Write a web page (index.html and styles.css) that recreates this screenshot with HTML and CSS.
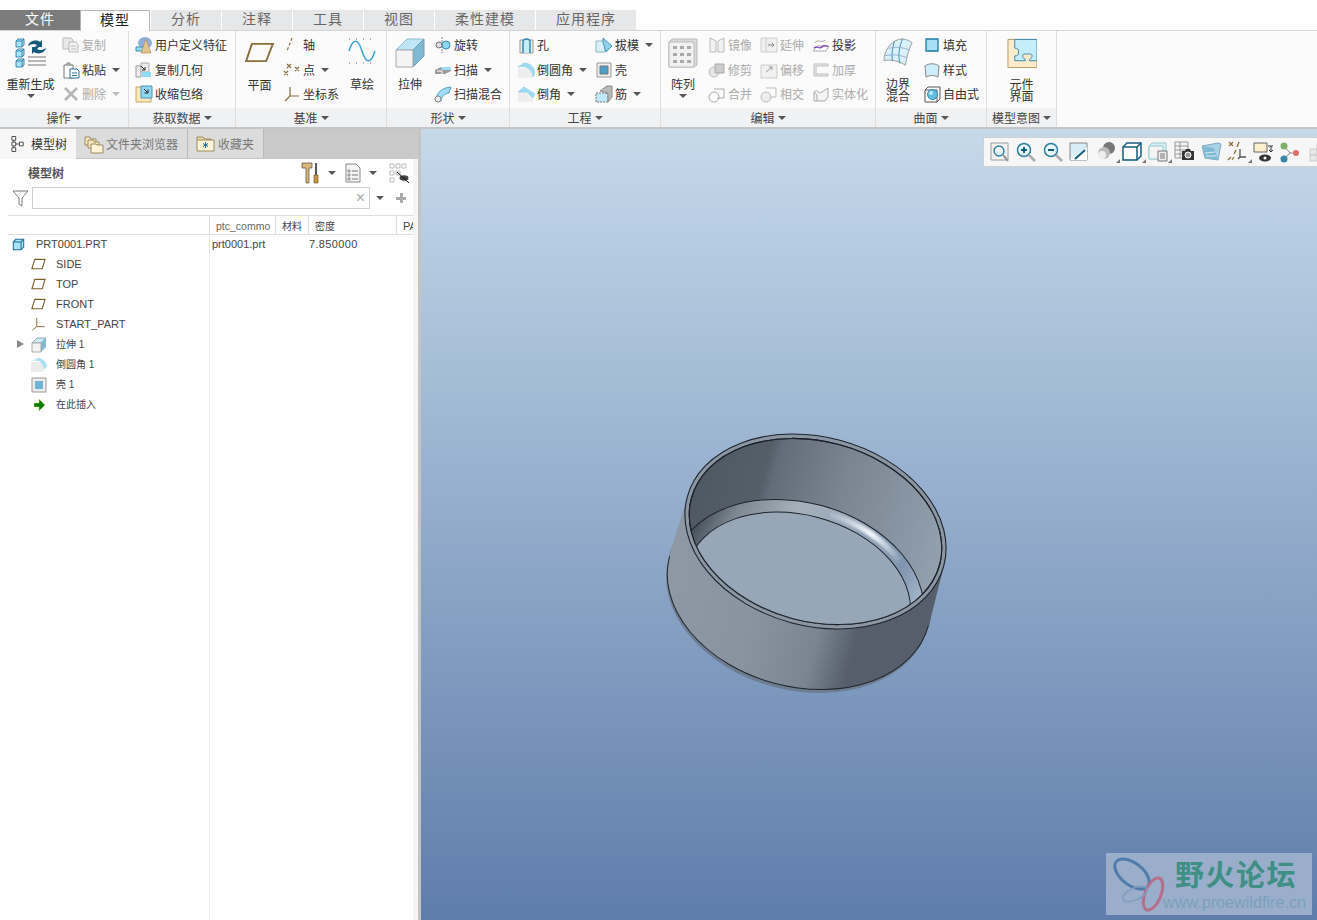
FILE: index.html
```html
<!DOCTYPE html>
<html lang="zh">
<head>
<meta charset="utf-8">
<title>Creo</title>
<link rel="stylesheet" href="styles.css">
</head>
<body>
<svg class="defs" width="0" height="0">
  <defs>
    <symbol id="cube" viewBox="0 0 10 10"><path d="M1 3l2-2h6v6l-2 2H1z" fill="#a9e3f8" stroke="#1d6f97" stroke-width=".8"/><path d="M1 3h6v6M7 3l2-2" fill="none" stroke="#1d6f97" stroke-width=".8"/></symbol>
    <symbol id="plane" viewBox="0 0 32 22"><path d="M8 2h22l-7 18H2z" fill="none" stroke="#8a6f3c" stroke-width="2"/></symbol>
    <linearGradient id="wall" gradientUnits="userSpaceOnUse" x1="668" y1="0" x2="945" y2="0">
      <stop offset="0" stop-color="#8e99a5"/><stop offset=".35" stop-color="#8893a0"/><stop offset=".58" stop-color="#7a8592"/><stop offset=".72" stop-color="#555e6a"/><stop offset="1" stop-color="#565f6b"/>
    </linearGradient>
    <linearGradient id="inner" gradientUnits="userSpaceOnUse" x1="690" y1="0" x2="945" y2="0">
      <stop offset="0" stop-color="#4f5964"/><stop offset=".24" stop-color="#555f6a"/><stop offset=".28" stop-color="#636d79"/><stop offset=".55" stop-color="#798591"/><stop offset="1" stop-color="#93a0ae"/>
    </linearGradient>
    <linearGradient id="fillet" gradientUnits="userSpaceOnUse" x1="690" y1="510" x2="925" y2="560">
      <stop offset="0" stop-color="#465059"/><stop offset=".13" stop-color="#7c8792"/><stop offset=".35" stop-color="#a5b0bb"/><stop offset=".6" stop-color="#96a6b8"/><stop offset=".85" stop-color="#7f94ae"/><stop offset="1" stop-color="#a9bbce"/>
    </linearGradient>
    <linearGradient id="shine" gradientUnits="userSpaceOnUse" x1="825" y1="510" x2="902" y2="563">
      <stop offset="0" stop-color="#eef5fb" stop-opacity="0"/><stop offset=".55" stop-color="#f4f9fd"/><stop offset="1" stop-color="#eef5fb" stop-opacity="0"/>
    </linearGradient>
    <filter id="soft" x="-20%" y="-20%" width="140%" height="140%"><feGaussianBlur stdDeviation="1.200"/></filter>
    <clipPath id="innerclip"><ellipse cx="815.5" cy="531.5" rx="128.5" ry="90" transform="rotate(15 815.5 531.5)"/></clipPath>
  </defs>
</svg>

<div class="topgap"></div>
<nav class="tabs">
  <div class="tab tab-file">文件</div>
  <div class="tab tab-active">模型</div>
  <div class="tab">分析</div>
  <div class="tab">注释</div>
  <div class="tab">工具</div>
  <div class="tab">视图</div>
  <div class="tab tab-wide">柔性建模</div>
  <div class="tab tab-wide">应用程序</div>
</nav>

<section class="ribbon">
  <div class="group g-ops">
    <div class="gbody">
      <div class="big big-regen">
        <svg class="ico-big" viewBox="0 0 32 30"><use href="#cube" x="0" y="0" width="10" height="10"/><use href="#cube" x="0" y="10" width="10" height="10"/><use href="#cube" x="0" y="20" width="10" height="10"/>
          <path d="M13 8c1-5 8-7 12-4l2-2v7h-7l2-2c-3-2-6-1-9 1z" fill="#16597d"/><path d="M31 10c-1 5-8 7-12 4l-2 2V9h7l-2 2c3 2 6 1 9-1z" fill="#16597d"/>
          <path d="M13 19h18M13 23h18M13 27h18" stroke="#a3a3a3" stroke-width="1.5"/></svg>
        <span class="lbl">重新生成</span><i class="caret"></i>
      </div>
      <div class="col">
        <div class="row off"><svg class="ico" viewBox="0 0 18 18"><path d="M1 2h8l2 2v9H1z" fill="#e8e8e8" stroke="#bbb"/><path d="M7 6h7l2 2v8H7z" fill="#f2f2f2" stroke="#bbb"/><path d="M9 10h5M9 13h5" stroke="#bbb"/></svg><span>复制</span></div>
        <div class="row"><svg class="ico" viewBox="0 0 18 18"><path d="M2 4h9v13H2z" fill="#fff" stroke="#777"/><path d="M5 4V2h3v2" fill="none" stroke="#777"/><path d="M8 8h7l2 2v7H8z" fill="#fff" stroke="#2b6f96"/><path d="M10 12h5M10 14.500h5" stroke="#2b6f96"/></svg><span>粘贴</span><i class="caret"></i></div>
        <div class="row off"><svg class="ico" viewBox="0 0 18 18"><path d="M3 3l12 12M15 3L3 15" stroke="#b5b5b5" stroke-width="2.500"/></svg><span>删除</span><i class="caret caret-off"></i></div>
      </div>
    </div>
    <div class="gfoot">操作<i class="caret"></i></div>
  </div>

  <div class="group g-get">
    <div class="gbody">
      <div class="col">
        <div class="row"><svg class="ico" viewBox="0 0 18 18"><ellipse cx="10" cy="7" rx="7" ry="6" fill="#8eaedb"/><path d="M1 11h8v4H1z" fill="#9cdcf4" stroke="#3e8ab0"/><path d="M11 3l5 14H6z" fill="#e4c48d" stroke="#a88a50" stroke-width=".6"/></svg><span>用户定义特征</span></div>
        <div class="row"><svg class="ico" viewBox="0 0 18 18"><path d="M1 5h5v11H1z" fill="#eee" stroke="#999"/><path d="M6 2h8v9H6z" fill="#eee" stroke="#aaa"/><path d="M7 11h9v5H7z" fill="#8fdcf7"/><path d="M6 5l4 4M10 6v3H7" stroke="#222" fill="none"/></svg><span>复制几何</span></div>
        <div class="row"><svg class="ico" viewBox="0 0 18 18"><path d="M1 2h15v15H1z" fill="#fbe8bd" stroke="#c9a75c"/><path d="M6 1h11v12H6z" fill="#8dd7f2" stroke="#4b94b8"/><path d="M9 4l4 4M13 4.500V8H9.500" stroke="#222" fill="none"/></svg><span>收缩包络</span></div>
      </div>
    </div>
    <div class="gfoot">获取数据<i class="caret"></i></div>
  </div>

  <div class="group g-datum">
    <div class="gbody">
      <div class="big big-plane">
        <svg class="ico-plane" viewBox="0 0 32 22"><use href="#plane" width="32" height="22"/></svg>
        <span class="lbl">平面</span>
      </div>
      <div class="col col-datum">
        <div class="row"><svg class="ico" viewBox="0 0 18 18"><path d="M9 2L4 15" stroke="#8a6f3c" stroke-width="1.200" stroke-dasharray="3 2"/></svg><span>轴</span></div>
        <div class="row"><svg class="ico" viewBox="0 0 18 18"><path d="M4 3l4 4M8 3L4 7M12 6l4 4M16 6l-4 4M1 10l4 4M5 10l-4 4" stroke="#8a6f3c" stroke-width="1.200"/></svg><span>点</span><i class="caret"></i></div>
        <div class="row"><svg class="ico" viewBox="0 0 18 18"><path d="M7 2v9h9M7 11l-5 5" fill="none" stroke="#8a6f3c" stroke-width="1.200"/></svg><span>坐标系</span></div>
      </div>
      <div class="big big-sketch">
        <svg class="ico-sketch" viewBox="0 0 28 28"><path d="M1 14C5 1 10 1 14 14s9 13 13 0" fill="none" stroke="#36a5d8" stroke-width="1.500"/><path d="M1 2h26M1 26h26" stroke="#666" stroke-dasharray="1 6"/></svg>
        <span class="lbl">草绘</span>
      </div>
    </div>
    <div class="gfoot">基准<i class="caret"></i></div>
  </div>

  <div class="group g-shape">
    <div class="gbody">
      <div class="big big-extrude">
        <svg class="ico-big30" viewBox="0 0 30 30"><path d="M1 12L12 1h17L18 12z" fill="#bfe6f5" stroke="#8fb9cc"/><path d="M18 12L29 1v17L18 29z" fill="#7fb9d3" stroke="#6a9fb8"/><path d="M1 12h17v17H1z" fill="#f4f4f4" stroke="#aaa"/></svg>
        <span class="lbl">拉伸</span>
      </div>
      <div class="col col-shape">
        <div class="row"><svg class="ico" viewBox="0 0 18 18"><path d="M8 1v16" stroke="#888" stroke-dasharray="2 1"/><circle cx="5" cy="9" r="3" fill="#ddd" stroke="#777"/><circle cx="12" cy="9" r="4" fill="#8ed8f4" stroke="#3b88ae"/></svg><span>旋转</span></div>
        <div class="row"><svg class="ico" viewBox="0 0 18 18"><path d="M1 9l6-3h10v4l-6 3H1z" fill="#9a9a9a"/><path d="M7 6h10v3H8z" fill="#9ddcf4"/><path d="M3 10h5v3" fill="none" stroke="#fff"/></svg><span>扫描</span><i class="caret"></i></div>
        <div class="row"><svg class="ico" viewBox="0 0 18 18"><path d="M2 14C3 7 8 3 17 2l-2 6c-5 1-7 3-8 8z" fill="#9ddcf4" stroke="#5d9fbd"/><circle cx="4" cy="14" r="3" fill="#eee" stroke="#888"/></svg><span>扫描混合</span></div>
      </div>
    </div>
    <div class="gfoot">形状<i class="caret"></i></div>
  </div>

  <div class="group g-eng">
    <div class="gbody">
      <div class="col col-eng1">
        <div class="row"><svg class="ico" viewBox="0 0 18 18"><path d="M3 4h13v13H3z" fill="#eee" stroke="#999"/><path d="M6 17V6c0-4 7-4 7 0v11" fill="#c8ecf8" stroke="#2e8ab3" stroke-width="1.500"/></svg><span>孔</span></div>
        <div class="row"><svg class="ico" viewBox="0 0 18 18"><path d="M1 17V7h6c5 0 8 3 8 10z" fill="#eee"/><path d="M1 6c8-2 14 2 15 10l2-4c-1-6-5-10-11-10z" fill="#9ddcf4" stroke="#7cc2de" stroke-width=".5"/></svg><span>倒圆角</span><i class="caret"></i></div>
        <div class="row"><svg class="ico" viewBox="0 0 18 18"><path d="M1 17V7l9 0 6 6v4z" fill="#eee"/><path d="M1 7l6-5 11 7-2 4-6-6z" fill="#9ddcf4" stroke="#7cc2de" stroke-width=".5"/></svg><span>倒角</span><i class="caret"></i></div>
      </div>
      <div class="col col-eng2">
        <div class="row"><svg class="ico" viewBox="0 0 18 18"><path d="M1 5h9v11H1z" fill="#d8f1fa" stroke="#8bb"/><path d="M8 2l9 8-6 6-3-10z" fill="#8fd2ec" stroke="#4b94b8"/></svg><span>拔模</span><i class="caret"></i></div>
        <div class="row"><svg class="ico" viewBox="0 0 18 18"><path d="M2 2h14v14H2z" fill="#eee" stroke="#999"/><path d="M5 5h8v8H5z" fill="#4aa0c8" stroke="#777"/></svg><span>壳</span></div>
        <div class="row"><svg class="ico" viewBox="0 0 18 18"><path d="M1 8h12v9H1z" fill="#bfe9f7" stroke="#777" stroke-dasharray="2 1"/><path d="M5 6l7-5h5v11l-4 5V8z" fill="#bbb" stroke="#888"/></svg><span>筋</span><i class="caret"></i></div>
      </div>
    </div>
    <div class="gfoot">工程<i class="caret"></i></div>
  </div>

  <div class="group g-edit">
    <div class="gbody">
      <div class="big big-pattern">
        <svg class="ico-big30" viewBox="0 0 30 30"><path d="M1 4l3-3h25v26l-3 2H1z" fill="#d8d8d8" stroke="#bbb"/><path d="M1 4h25v25H1z" fill="#f1f1f1" stroke="#bbb"/><path d="M5 8h4v3H5zm7 0h4v3h-4zm7 0h4v3h-4zM5 15h4v3H5zm7 0h4v3h-4zm7 0h4v3h-4zM5 22h4v3H5zm7 0h4v3h-4zm7 0h4v3h-4z" fill="#aaa"/></svg>
        <span class="lbl">阵列</span><i class="caret"></i>
      </div>
      <div class="col col-ed1">
        <div class="row off"><svg class="ico" viewBox="0 0 18 18"><path d="M2 2l6 3v11H2zM16 2l-6 3v11h6z" fill="#f2f2f2" stroke="#bbb"/></svg><span>镜像</span></div>
        <div class="row off"><svg class="ico" viewBox="0 0 18 18"><circle cx="6" cy="11" r="5" fill="#e6e6e6" stroke="#bbb"/><path d="M7 3h9v9H7z" fill="#ccc" stroke="#aaa"/></svg><span>修剪</span></div>
        <div class="row off"><svg class="ico" viewBox="0 0 18 18"><circle cx="6" cy="12" r="5" fill="#fff" stroke="#aaa"/><path d="M6 4h10v9H9" fill="none" stroke="#aaa"/></svg><span>合并</span></div>
      </div>
      <div class="col col-ed2">
        <div class="row off"><svg class="ico" viewBox="0 0 18 18"><path d="M1 2h16v14H1z" fill="#f0f0f0" stroke="#ccc"/><path d="M6 2v14" stroke="#ccc"/><path d="M8 9h6m-2-2l2 2-2 2" fill="none" stroke="#888"/></svg><span>延伸</span></div>
        <div class="row off"><svg class="ico" viewBox="0 0 18 18"><path d="M1 4h16v13H1z" fill="#f0f0f0" stroke="#ccc"/><path d="M6 11l6-5m-3 0h3v3" fill="none" stroke="#999"/></svg><span>偏移</span></div>
        <div class="row off"><svg class="ico" viewBox="0 0 18 18"><circle cx="6" cy="12" r="5" fill="#eee" stroke="#bbb"/><path d="M6 3h10v9H10" fill="none" stroke="#bbb"/></svg><span>相交</span></div>
      </div>
      <div class="col col-ed3">
        <div class="row"><svg class="ico" viewBox="0 0 18 18"><path d="M1 15l4-5h12l-3 5z" fill="#fff" stroke="#aaa"/><path d="M3 7c3-5 6 1 10-3" fill="none" stroke="#aaa"/><path d="M2 12c3-3 5 2 8-1s4 0 6-1" fill="none" stroke="#7a43b8" stroke-width="1.300"/></svg><span>投影</span></div>
        <div class="row off"><svg class="ico" viewBox="0 0 18 18"><path d="M2 3h14v2H4v8h12v2H2z" fill="#eee" stroke="#bbb"/></svg><span>加厚</span></div>
        <div class="row off"><svg class="ico" viewBox="0 0 18 18"><path d="M2 7c4-4 4 3 8 0l6-4v9l-3 4H2z" fill="#f4f4f4" stroke="#aaa"/><path d="M2 7l3 3v6" fill="none" stroke="#aaa"/></svg><span>实体化</span></div>
      </div>
    </div>
    <div class="gfoot">编辑<i class="caret"></i></div>
  </div>

  <div class="group g-surf">
    <div class="gbody">
      <div class="big big-bound">
        <svg class="ico-bound" viewBox="0 0 32 32"><path d="M1 24C1 12 10 2 20 1c5 0 10 3 11 4-4 8-6 16-7 24-8-5-16-6-23-5z" fill="#d9f1fa" stroke="#999"/><path d="M12 4c-2 7-3 14-2 20M21 1c-4 8-5 18-3 26" fill="none" stroke="#3a8cb0"/><path d="M2 19c9-2 16-1 23 2M6 11c8-2 15-1 23 2" fill="none" stroke="#9ac"/></svg>
        <span class="lbl lbl-two">边界<br>混合</span>
      </div>
      <div class="col col-surf">
        <div class="row"><svg class="ico" viewBox="0 0 18 18"><path d="M3 3h12v12H3z" fill="#a8dff5" stroke="#1e7aa3" stroke-width="1.300"/></svg><span>填充</span></div>
        <div class="row"><svg class="ico" viewBox="0 0 18 18"><path d="M2 5c4-3 10-3 14 0l-1 11c-4-2-8-2-12 0z" fill="#cdeefa" stroke="#888"/></svg><span>样式</span></div>
        <div class="row"><svg class="ico" viewBox="0 0 18 18"><path d="M2 5h12v12H2zM2 5l3-3h12v12l-3 3" fill="#fff" stroke="#555"/><circle cx="9.500" cy="9.500" r="5" fill="#5fbde0" stroke="#3b88ae"/><circle cx="8" cy="8" r="2" fill="#bdeafa"/></svg><span>自由式</span></div>
      </div>
    </div>
    <div class="gfoot">曲面<i class="caret"></i></div>
  </div>

  <div class="group g-intent">
    <div class="gbody">
      <div class="big big-comp">
        <svg class="ico-big30" viewBox="0 0 31 30"><path d="M1 1h30v29H1z" fill="#fdeccb" stroke="#b59a60"/><path d="M8 1h23v22h-8c0-3 3-2 3-5 0-2-2-2-5-2s-5 0-5 2c0 3 3 2 3 5H8v-5c3 0 4-1 4-4s-1-4-4-4z" fill="#c6edfa" stroke="#3b88ae"/></svg>
        <span class="lbl lbl-two">元件<br>界面</span>
      </div>
    </div>
    <div class="gfoot">模型意图<i class="caret"></i></div>
  </div>
</section>

<main class="work">
  <aside class="panel">
    <div class="ptabs">
      <div class="ptab ptab-on"><svg class="ico-tab" viewBox="0 0 16 18"><path d="M1 1h4v4H1zM1 7h4v4H1zM1 13h4v4H1zM9 7h4v4H9zM3 5v2M3 11v2M5 9h4" fill="#fff" stroke="#444"/></svg>模型树</div>
      <div class="ptab ptab-folder"><svg class="ico-tab2" viewBox="0 0 20 20"><path d="M1 3h5l1 2h5v6H1z" fill="#f6e7bf" stroke="#9a8a60"/><path d="M4 6h5l1 2h5v6H4z" fill="#f6e7bf" stroke="#9a8a60"/><path d="M7 10h5l1 1h6v8H7z" fill="#fdf3d6" stroke="#9a8a60"/></svg>文件夹浏览器</div>
      <div class="ptab ptab-fav"><svg class="ico-tab2" viewBox="0 0 20 20"><path d="M1 6V3h6l2 2h6v1" fill="#ecd9a4" stroke="#9a8a60"/><path d="M1 6h17v11H1z" fill="#fdf3d6" stroke="#9a8a60"/><path d="M9.500 8v6M7 9.500l5 3M12 9.500l-5 3" stroke="#1d6f97"/></svg>收藏夹</div>
    </div>
    <div class="pbody">
      <div class="phead">
        <span class="ptitle">模型树</span>
        <div class="ptools">
          <svg class="ico-tool" viewBox="0 0 18 22"><path d="M1 1h10v5H8v15H5V6H1z" fill="#d9b778" stroke="#5a4a30" stroke-width=".7"/><path d="M14 1h2v12h-2z" fill="#555"/><path d="M13 13h4v8h-4z" fill="#c9973d" stroke="#6b5020" stroke-width=".6"/></svg>
          <i class="caret"></i>
          <svg class="ico-tool2" viewBox="0 0 16 20"><path d="M1 1h10l4 4v14H1z" fill="#f4f4f4" stroke="#888"/><path d="M3 7h2v2H3zm0 4h2v2H3zm0 4h2v2H3z" fill="#fff" stroke="#555" stroke-width=".6"/><path d="M7 8h6M7 12h6M7 16h6" stroke="#777"/></svg>
          <i class="caret"></i>
          <svg class="ico-tool3" viewBox="0 0 21 21"><path d="M1 1h4v4H1zM7 1h4v4H7zM13 1h4v4h-4zM1 8h4v4H1zM1 15h4v4H1zM7 8h4v4H7z" fill="none" stroke="#bbb"/><ellipse cx="15" cy="15" rx="4.500" ry="2.800" fill="#444"/><path d="M8 9l12 11" stroke="#111"/></svg>
        </div>
      </div>
      <div class="pfilter">
        <svg class="ico-funnel" viewBox="0 0 17 17"><path d="M1 1h15l-6 7v8l-3-2V8z" fill="#fff" stroke="#777"/></svg>
        <div class="pinput"><span class="clear">×</span></div>
        <i class="caret"></i>
        <span class="plus"></span>
      </div>
      <div class="thead">
        <div class="th th-name"></div>
        <div class="th th-ptc"><span class="clip">ptc_commo</span></div>
        <div class="th th-mat">材料</div>
        <div class="th th-den">密度</div>
        <div class="th th-pa"><span class="clip">PA</span></div>
      </div>
      <div class="tbody">
        <div class="tnames">
          <div class="node node-root"><svg class="ico-node" viewBox="0 0 14 14"><use href="#cube" width="14" height="14"/></svg>PRT0001.PRT</div>
          <div class="node"><svg class="ico-node" viewBox="0 0 16 12"><path d="M4 1h11l-3 10H1z" fill="none" stroke="#7c5f2e" stroke-width="1.200"/></svg>SIDE</div>
          <div class="node"><svg class="ico-node" viewBox="0 0 16 12"><path d="M4 1h11l-3 10H1z" fill="none" stroke="#7c5f2e" stroke-width="1.200"/></svg>TOP</div>
          <div class="node"><svg class="ico-node" viewBox="0 0 16 12"><path d="M4 1h11l-3 10H1z" fill="none" stroke="#7c5f2e" stroke-width="1.200"/></svg>FRONT</div>
          <div class="node"><svg class="ico-node" viewBox="0 0 16 16"><path d="M6 1v10h9M6 11l-5 4" fill="none" stroke="#7c5f2e"/></svg>START_PART</div>
          <div class="node node-cjk"><i class="expander"></i><svg class="ico-node" viewBox="0 0 16 16"><path d="M1 6l5-5h9L10 6z" fill="#cdeaf5" stroke="#8ab"/><path d="M10 6l5-5v9l-5 5z" fill="#7fb9d3"/><path d="M1 6h9v9H1z" fill="#f4f4f4" stroke="#aaa"/></svg>拉伸 1</div>
          <div class="node node-cjk"><svg class="ico-node" viewBox="0 0 16 16"><path d="M0 15V5h6c5 0 7 4 7 10z" fill="#ececec"/><path d="M1 4c6-2 11 1 12 9l3-4c-1-4-4-8-9-8z" fill="#a9e0f5"/></svg>倒圆角 1</div>
          <div class="node node-cjk"><svg class="ico-node" viewBox="0 0 16 16"><path d="M1 1h14v14H1z" fill="#ececec" stroke="#999"/><path d="M4 4h8v8H4z" fill="#6fb4d4"/></svg>壳 1</div>
          <div class="node node-cjk"><svg class="ico-node" viewBox="0 0 16 14"><path d="M3 5h5V1l6 6-6 6V9H3z" fill="#0a7a0a" stroke="#c8e060" stroke-width=".5"/></svg>在此插入</div>
        </div>
        <div class="tvals">
          <div class="vrow"><span class="v-ptc">prt0001.prt</span><span class="v-den">7.850000</span></div>
        </div>
      </div>
    </div>
  </aside>

  <section class="view">
    <svg class="model" viewBox="421 129 896 791">
      <ellipse cx="798" cy="594" rx="134" ry="96" transform="rotate(15 798 594)" fill="#6d7d92"/>
      <ellipse cx="799" cy="591" rx="134" ry="95.500" transform="rotate(15 799 591)" fill="url(#wall)" stroke="#20262c"/>
      <path d="M687.200 497.100L669.100 556.300 928.900 625.700 943.800 565.900Z" fill="url(#wall)"/>
      <ellipse cx="815.500" cy="531.500" rx="132.800" ry="94.400" transform="rotate(15 815.500 531.500)" fill="#8a96a3" stroke="#1d2329" stroke-width="1.100"/>
      <ellipse cx="815.500" cy="531.500" rx="128.500" ry="90" transform="rotate(15 815.500 531.500)" fill="url(#inner)" stroke="#1d2329" stroke-width="1.100"/>
      <g clip-path="url(#innerclip)">
        <ellipse cx="798.500" cy="591.500" rx="127.500" ry="89" transform="rotate(15 798.500 591.500)" fill="url(#fillet)" stroke="#1d2329"/>
        <path d="M830 514A120.500 83.500 15 0 1 899.500 561" fill="none" stroke="url(#shine)" stroke-width="6" filter="url(#soft)"/>
        <ellipse cx="798.500" cy="593" rx="114" ry="78" transform="rotate(15 798.500 593)" fill="#98a7b8" stroke="#1d2329"/>
      </g>
      <ellipse cx="815.500" cy="531.500" rx="128.500" ry="90" transform="rotate(15 815.500 531.500)" fill="none" stroke="#1d2329" stroke-width="1.100"/>
    </svg>
    <div class="vtools">
      <div class="vt"><svg viewBox="0 0 24 22"><path d="M3 2h17v17H3z" fill="#f5f5f5" stroke="#999"/><circle cx="11" cy="10" r="5" fill="#eaf6fb" stroke="#2e7fa5" stroke-width="1.400"/><path d="M15 14l5 6" stroke="#999" stroke-width="2"/></svg></div>
      <div class="vt"><svg viewBox="0 0 24 22"><circle cx="10" cy="9" r="6.500" fill="#e8f5fb" stroke="#2e7fa5" stroke-width="1.500"/><path d="M7 9h6M10 6v6" stroke="#145c80" stroke-width="2"/><path d="M15 14l6 6" stroke="#aaa" stroke-width="2.500"/></svg></div>
      <div class="vt"><svg viewBox="0 0 24 22"><circle cx="10" cy="9" r="6.500" fill="#e8f5fb" stroke="#2e7fa5" stroke-width="1.500"/><path d="M7 9h6" stroke="#145c80" stroke-width="2"/><path d="M15 14l6 6" stroke="#aaa" stroke-width="2.500"/></svg></div>
      <div class="vt"><svg viewBox="0 0 24 22"><path d="M3 2h17v17H3z" fill="#d8eef7" stroke="#888"/><path d="M3 19L20 6v13z" fill="#fff"/><path d="M8 18l10-9" stroke="#145c80" stroke-width="2"/></svg></div>
      <div class="vt vt-more"><svg viewBox="0 0 24 22"><circle cx="15" cy="7" r="6" fill="#777"/><circle cx="10" cy="12" r="6" fill="#bbb"/><circle cx="8" cy="14" r="4" fill="#eee"/></svg></div>
      <div class="vt vt-more"><svg viewBox="0 0 24 22"><path d="M3 6l4-4h14v13l-4 4H3z" fill="#fff" stroke="#145c80" stroke-width="1.500"/><path d="M3 6h14v13M17 6l4-4" fill="none" stroke="#145c80" stroke-width="1.500"/></svg></div>
      <div class="vt vt-more"><svg viewBox="0 0 24 22"><path d="M3 5l3-3h14v13l-3 3H3z" fill="#d5eef8" stroke="#9cc"/><path d="M3 5h14v13H3z" fill="#f3f3f3" stroke="#9cc"/><path d="M12 10h9v10h-9z" fill="#eee" stroke="#777"/><path d="M14 13h5M14 15h5M14 17h5" stroke="#777"/></svg></div>
      <div class="vt"><svg viewBox="0 0 24 22"><path d="M2 1h13v16H2zM2 5h13M2 9h13M2 13h13M7 1v16" fill="#f4f4f4" stroke="#999"/><path d="M9 10h3l1-2h4l1 2h3v9H9z" fill="#333"/><circle cx="15" cy="14" r="3" fill="#999" stroke="#fff"/></svg></div>
      <div class="vt"><svg viewBox="0 0 24 22"><path d="M3 5l16-3 3 1-3 16-13-2z" fill="#a8d3e6" stroke="#7fa9bd"/><path d="M3 5l3 12 13 2-4-12z" fill="#7fb9d3"/><path d="M6 12l10-1M7 15l10 0" stroke="#d6eef8"/></svg></div>
      <div class="vt vt-more"><svg viewBox="0 0 24 22"><path d="M3 1l4 4M7 1L3 5M13 1l-2 5M10 9l-2 4M2 19l3-3M6 19l2-3" stroke="#8a6f3c" stroke-width="1.300"/><path d="M14 8v8h6M14 16l-2 2" fill="none" stroke="#555" stroke-width="1.300"/></svg></div>
      <div class="vt"><svg viewBox="0 0 24 22"><path d="M2 2h13v9H2z" fill="#fdf0cf" stroke="#666"/><path d="M16 5h5M19 5v6m-2-2l2 2 2-2" fill="none" stroke="#333"/><ellipse cx="13" cy="17" rx="6" ry="3.500" fill="#333"/><circle cx="13" cy="17" r="1.500" fill="#fff"/></svg></div>
      <div class="vt"><svg viewBox="0 0 24 22"><path d="M6 5l6 7-6 6M12 12h8" fill="none" stroke="#888"/><circle cx="6" cy="5" r="3.500" fill="#7fb069"/><circle cx="6" cy="18" r="3.500" fill="#3a87a8"/><circle cx="18" cy="12" r="3" fill="#e36c6c"/></svg></div>
      <div class="vt"><svg viewBox="0 0 24 22"><path d="M5 8h7v6H5zM12 8h7v6h-7zM5 14h7v6H5zM12 2h7v6h-7z" fill="#e8e8e8" stroke="#ccc"/></svg></div>
    </div>
    <div class="wm">
      <svg class="wm-logo" viewBox="0 0 60 58"><ellipse cx="23" cy="18" rx="20" ry="11" transform="rotate(38 23 18)" fill="none" stroke="#4f7dab" stroke-width="3"/><ellipse cx="44" cy="38" rx="8" ry="17" transform="rotate(22 44 38)" fill="none" stroke="#b66f88" stroke-width="3"/><ellipse cx="26" cy="38" rx="13" ry="6" transform="rotate(-25 26 38)" fill="none" stroke="#7d9cbc" stroke-width="1.500"/></svg>
      <div class="wm-title">野火论坛</div>
      <div class="wm-url">www.proewildfire.cn</div>
    </div>
  </section>
</main>
</body>
</html>
```

FILE: styles.css
```css
* { box-sizing: border-box; }
html, body { margin: 0; padding: 0; }
body {
  width: 1317px; height: 920px; overflow: hidden; background: #fff;
  font-family: "Noto Sans CJK SC", "Liberation Sans", sans-serif;
  font-size: 12px; color: #333; line-height: 1;
}
.defs { position: absolute; }
svg { display: block; flex: none; }
i { font-style: normal; }
.caret {
  display: block; flex: none; width: 0; height: 0;
  border: 4px solid transparent; border-top: 4px solid #555; border-bottom-width: 0;
}
.caret-off { border-top-color: #bbb; }

.topgap { height: 10px; }
.tabs { display: flex; height: 21px; border-bottom: 1px solid #d4d4d4; }
.tab {
  width: 70px; height: 20px; margin-right: 1px; background: #e6e7e9; color: #666;
  font-size: 14px; letter-spacing: 1px; display: flex; align-items: center; justify-content: center;
  padding-bottom: 4px;
}
.tab-file { width: 80px; margin-right: 0; background: #7c7c7c; color: #fff; }
.tab-active { width: 70px; height: 21px; background: #fff; color: #222; border: 1px solid #b4b4b4; border-bottom: 0; position: relative; z-index: 1; padding-bottom: 5px; }
.tab-wide { width: 100px; }

.ribbon { display: flex; height: 98px; background: #fbfbfb; border-bottom: 2px solid #c5c5c5; }
.group { display: flex; flex-direction: column; border-right: 1px solid #dedede; flex: none; }
.gbody { height: 77px; display: flex; padding-top: 2px; }
.gfoot {
  height: 19px; background: #f0f1f3; color: #444; display: flex; align-items: center;
  justify-content: center; gap: 3px;
}
.g-ops { width: 129px; } .g-get { width: 107px; } .g-datum { width: 151px; }
.g-shape { width: 123px; } .g-eng { width: 151px; } .g-edit { width: 215px; }
.g-surf { width: 111px; } .g-intent { width: 70px; }

.big { display: flex; flex-direction: column; align-items: center; flex: none; padding-top: 5px; position: relative; }
.lbl { display: block; white-space: nowrap; color: #333; }
.lbl-two { line-height: 12px; margin-top: 9px; text-align: center; }
.big .caret { margin-top: 4px; }
.ico-big { width: 32px; height: 30px; margin-bottom: 10px; }
.ico-big30 { width: 30px; height: 30px; margin-bottom: 10px; }
.big-regen { width: 61px; }
.big-plane { width: 47px; padding-top: 9px; }
.ico-plane { width: 31px; height: 21px; margin-bottom: 16px; }
.big-sketch { width: 36px; padding-top: 4px; }
.ico-sketch { width: 28px; height: 28px; margin-bottom: 13px; }
.big-extrude { width: 46px; }
.big-pattern { width: 44px; }
.big-bound { width: 44px; padding-top: 5px; }
.big-bound .lbl-two { margin-top: 10px; }
.ico-bound { width: 32px; height: 30px; }
.big-comp { width: 69px; }
.big-comp .ico-big30 { margin-bottom: 0; }
.big-comp .lbl-two { margin-top: 10px; }

.col { display: flex; flex-direction: column; flex: none; }
.row { height: 24.500px; display: flex; align-items: center; gap: 2px; color: #333; white-space: nowrap; }
.row .caret { margin-left: 4px; }
.off { color: #ababab; }
.ico { width: 18px; height: 18px; }
.g-ops .col { margin-left: 1px; }
.g-get .col { margin-left: 6px; }
.col-datum { width: 61px; }
.col-shape { margin-left: 1px; }
.col-eng1 { margin-left: 7px; width: 78px; }
.col-ed1 { margin-left: 3px; width: 52px; }
.col-ed2 { width: 52px; }
.col-ed3 { width: 58px; }
.col-surf { margin-left: 3px; }

.work { display: flex; height: 791px; }
.panel { width: 421px; flex: none; display: flex; flex-direction: column; background: #c9c9c9; border-right: 3px solid #c4c4c4; }
.ptabs { display: flex; height: 30px; flex: none; }
.ptab {
  display: flex; align-items: center; height: 30px; font-size: 12px; color: #777;
  background: #dcdcdc; border-right: 1px solid #b9b9b9; border-bottom: 1px solid #c4c4c4; padding-left: 8px;
}
.ptab-on { width: 76px; background: #f7f7f7; color: #333; border: 0; padding-left: 11px; }
.ptab-folder { width: 112px; }
.ptab-fav { width: 76px; }
.ico-tab { width: 15px; height: 18px; margin-right: 5px; }
.ico-tab2 { width: 20px; height: 20px; margin-right: 2px; }

.pbody { flex: 1; background: #fff; display: flex; flex-direction: column; padding: 0 5px 0 8px; box-shadow: inset -5px 0 0 #f5f5f5; }
.phead { height: 28px; display: flex; align-items: center; padding-left: 20px; justify-content: space-between; padding-right: 5px; flex: none; }
.ptitle { font-weight: 700; color: #555; font-size: 12px; }
.ptools { display: flex; align-items: center; }
.ico-tool { width: 18px; height: 22px; margin-right: 9px; }
.ptools .caret { margin-right: 9px; }
.ico-tool2 { width: 16px; height: 20px; margin-right: 8px; }
.ico-tool3 { width: 21px; height: 21px; margin-left: 3px; margin-right: -2px; }
.pfilter { height: 25px; display: flex; align-items: center; margin-left: -8px; flex: none; padding-bottom: 3px; }
.ico-funnel { width: 17px; height: 17px; margin: 0 3px 0 12px; }
.pinput { width: 338px; height: 22px; background: #fff; border: 1px solid #cfcfcf; display: flex; align-items: center; justify-content: flex-end; padding-right: 4px; }
.clear { color: #aaa; font-family: "Liberation Sans", sans-serif; font-size: 16px; }
.pfilter .caret { margin-left: 6px; }
.plus { display: block; width: 10px; height: 10px; margin-left: 12px; background: linear-gradient(#aaa,#aaa) center/10px 3px no-repeat, linear-gradient(#aaa,#aaa) center/3px 10px no-repeat; }
.thead { display: flex; height: 20px; border-top: 1px solid #ddd; border-bottom: 1px solid #ddd; flex: none; margin-top: 3px; width: 405px; font-size: 10px; color: #444; }
.th { border-right: 1px solid #ddd; display: flex; align-items: center; overflow: hidden; white-space: nowrap; padding-top: 2px; flex: none; }
.th-name { width: 202px; }
.th-ptc { width: 66px; padding-left: 6px; font-family: "Liberation Sans", sans-serif; font-size: 10.500px; }
.th-ptc .clip { color: #666; }
.th-mat { width: 33px; justify-content: center; }
.th-den { width: 88px; padding-left: 6px; }
.th-pa { width: 16px; border-right: 0; padding-left: 6px; font-family: "Liberation Sans", sans-serif; font-size: 11px; }
.tbody { flex: 1; display: flex; width: 405px; margin-top: -1px; }
.tnames { width: 201px; flex: none; }
.tvals { flex: 1; border-left: 1px solid #e8e8e8; }
.node { height: 20px; display: flex; align-items: center; padding-left: 23px; font-size: 11px; color: #444; white-space: nowrap; position: relative; font-family: "Liberation Sans", "Noto Sans CJK SC", sans-serif; }
.node-root { padding-left: 4px; }
.node-root .ico-node { margin-right: 11px; width: 13px; height: 13px; }
.ico-node { width: 15px; height: 14px; margin-right: 10px; }
.node-cjk { font-size: 10px; padding-left: 23px; padding-top: 1px; }
.node-cjk .ico-node { width: 16px; height: 16px; margin-right: 9px; }
.expander { position: absolute; left: 9px; top: 6px; width: 0; height: 0; border: 4px solid transparent; border-left: 7px solid #888; border-right: 0; }
.vrow { height: 20px; display: flex; align-items: center; font-family: "Liberation Sans", sans-serif; font-size: 11px; color: #444; }
.v-ptc { width: 99px; padding-left: 2px; }
.v-den { letter-spacing: .35px; }

.view {
  flex: 1; position: relative; overflow: hidden;
  background: linear-gradient(#c5d9ea 0%, #5f7dab 100%);
}
.model { position: absolute; left: 0; top: 0; width: 896px; height: 791px; }
.vtools {
  position: absolute; top: 8px; left: 562px; width: 340px; height: 30px; background: #f6f6f6;
  border: 1px solid #d0d0d0; display: flex; align-items: center; padding-left: 4px; gap: 2.400px;
}
.vt { width: 24px; height: 22px; flex: none; position: relative; }
.vt svg { width: 24px; height: 22px; }
.vt-more::after { content: ""; position: absolute; right: -2px; bottom: 0; border: 2px solid transparent; border-right-color: #777; border-bottom-color: #777; }
.wm {
  position: absolute; right: 5px; bottom: 5px; width: 206px; height: 62px; background: #9aaecb;
  overflow: hidden;
}
.wm-logo { position: absolute; left: 3px; top: 3px; width: 60px; height: 58px; }
.wm-title { position: absolute; left: 69px; top: 3px; font-size: 29px; font-weight: 700; color: #3f8f85; letter-spacing: 1.500px; line-height: 34px; white-space: nowrap; }
.wm-url { position: absolute; left: 57px; top: 39px; font-family: "Liberation Sans", sans-serif; font-size: 16.200px; color: #7aa0bb; line-height: 20px; white-space: nowrap; }
```
